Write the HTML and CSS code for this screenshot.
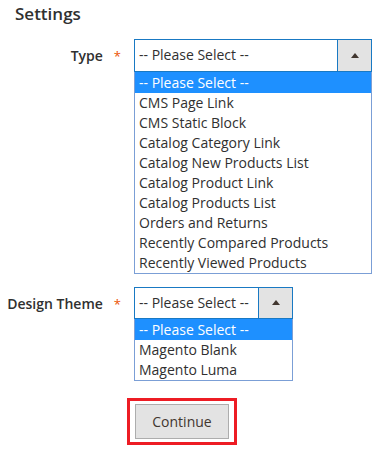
FILE: index.html
```html
<!DOCTYPE html>
<html lang="en">
<head>
    <meta charset="UTF-8">
    <meta name="viewport" content="width=device-width, initial-scale=1.0">
    <title>Widget Settings</title>
    <link rel="stylesheet" href="styles.css">
</head>
<body>
    <div class="settings">
        <h2 class="settings-title">Settings</h2>

        <div class="field field-type">
            <label class="field-label">Type<span class="required">*</span></label>
            <div class="control control-wide">
                <div class="select-box">
                    <span class="select-value">-- Please Select --</span>
                    <span class="select-arrow"></span>
                </div>
                <ul class="select-list">
                    <li class="selected">-- Please Select --</li>
                    <li>CMS Page Link</li>
                    <li>CMS Static Block</li>
                    <li>Catalog Category Link</li>
                    <li>Catalog New Products List</li>
                    <li>Catalog Product Link</li>
                    <li>Catalog Products List</li>
                    <li>Orders and Returns</li>
                    <li>Recently Compared Products</li>
                    <li>Recently Viewed Products</li>
                </ul>
            </div>
        </div>

        <div class="field field-theme">
            <label class="field-label">Design Theme<span class="required">*</span></label>
            <div class="control control-narrow">
                <div class="select-box">
                    <span class="select-value">-- Please Select --</span>
                    <span class="select-arrow"></span>
                </div>
                <ul class="select-list">
                    <li class="selected">-- Please Select --</li>
                    <li>Magento Blank</li>
                    <li>Magento Luma</li>
                </ul>
            </div>
        </div>

        <div class="actions">
            <div class="highlight">
                <button type="button" class="continue-btn">Continue</button>
            </div>
        </div>
    </div>
</body>
</html>
```

FILE: styles.css
```css
body {
    margin: 0;
    font-family: 'Open Sans', 'Liberation Sans', sans-serif;
    color: #303030;
    background-color: #fff;
}

.settings {
    padding: 4px 0 0 0;
}

.settings-title {
    margin: 0 0 15px 15px;
    font-size: 17px;
    font-weight: 600;
    line-height: 20px;
    color: #303030;
}

.field {
    display: flex;
    align-items: flex-start;
}

.field-theme {
    margin-top: 13px;
}

.field-label {
    width: 134px;
    box-sizing: border-box;
    padding-right: 13px;
    padding-top: 7px;
    text-align: right;
    font-size: 14px;
    font-weight: 600;
    line-height: 20px;
    color: #303030;
}

.required {
    color: #eb5202;
    font-weight: 400;
    font-size: 13px;
    margin-left: 11px;
}

.control-wide {
    width: 238px;
}

.control-narrow {
    width: 159px;
}

.select-box {
    display: flex;
    height: 33px;
    box-sizing: border-box;
    border: 1px solid #1979c3;
    background-color: #fff;
}

.field-theme .select-box {
    height: 32px;
}

.select-value {
    flex: 1;
    padding-left: 4px;
    font-size: 14px;
    line-height: 30px;
    color: #303030;
}

.select-arrow {
    width: 33px;
    border-left: 1px solid #1979c3;
    background-color: #e3e3e3;
    position: relative;
}

.select-arrow::after {
    content: '';
    position: absolute;
    left: 50%;
    top: 50%;
    margin-left: -4px;
    margin-top: -3px;
    border-left: 4px solid transparent;
    border-right: 4px solid transparent;
    border-bottom: 5px solid #41362f;
}

.select-list {
    list-style: none;
    margin: 0;
    padding: 0;
    border: 1px solid #7b9fd6;
    border-top: none;
    background-color: #fff;
}

.select-list li {
    height: 20px;
    padding-left: 4px;
    font-size: 14px;
    line-height: 20px;
    color: #303030;
    white-space: nowrap;
}

.select-list li.selected {
    height: 21px;
    line-height: 21px;
    background-color: #1e90ff;
    color: #fff;
}

.actions {
    margin-top: 17px;
    padding-left: 127px;
}

.highlight {
    display: inline-block;
    padding: 3px 5px;
    border: 3px solid #ed1c24;
}

.continue-btn {
    width: 94px;
    height: 35px;
    padding: 0;
    font-family: 'Open Sans', 'Liberation Sans', sans-serif;
    font-size: 14px;
    font-weight: 400;
    color: #41362f;
    background-color: #e3e3e3;
    border: 1px solid #adadad;
    cursor: pointer;
}
```
